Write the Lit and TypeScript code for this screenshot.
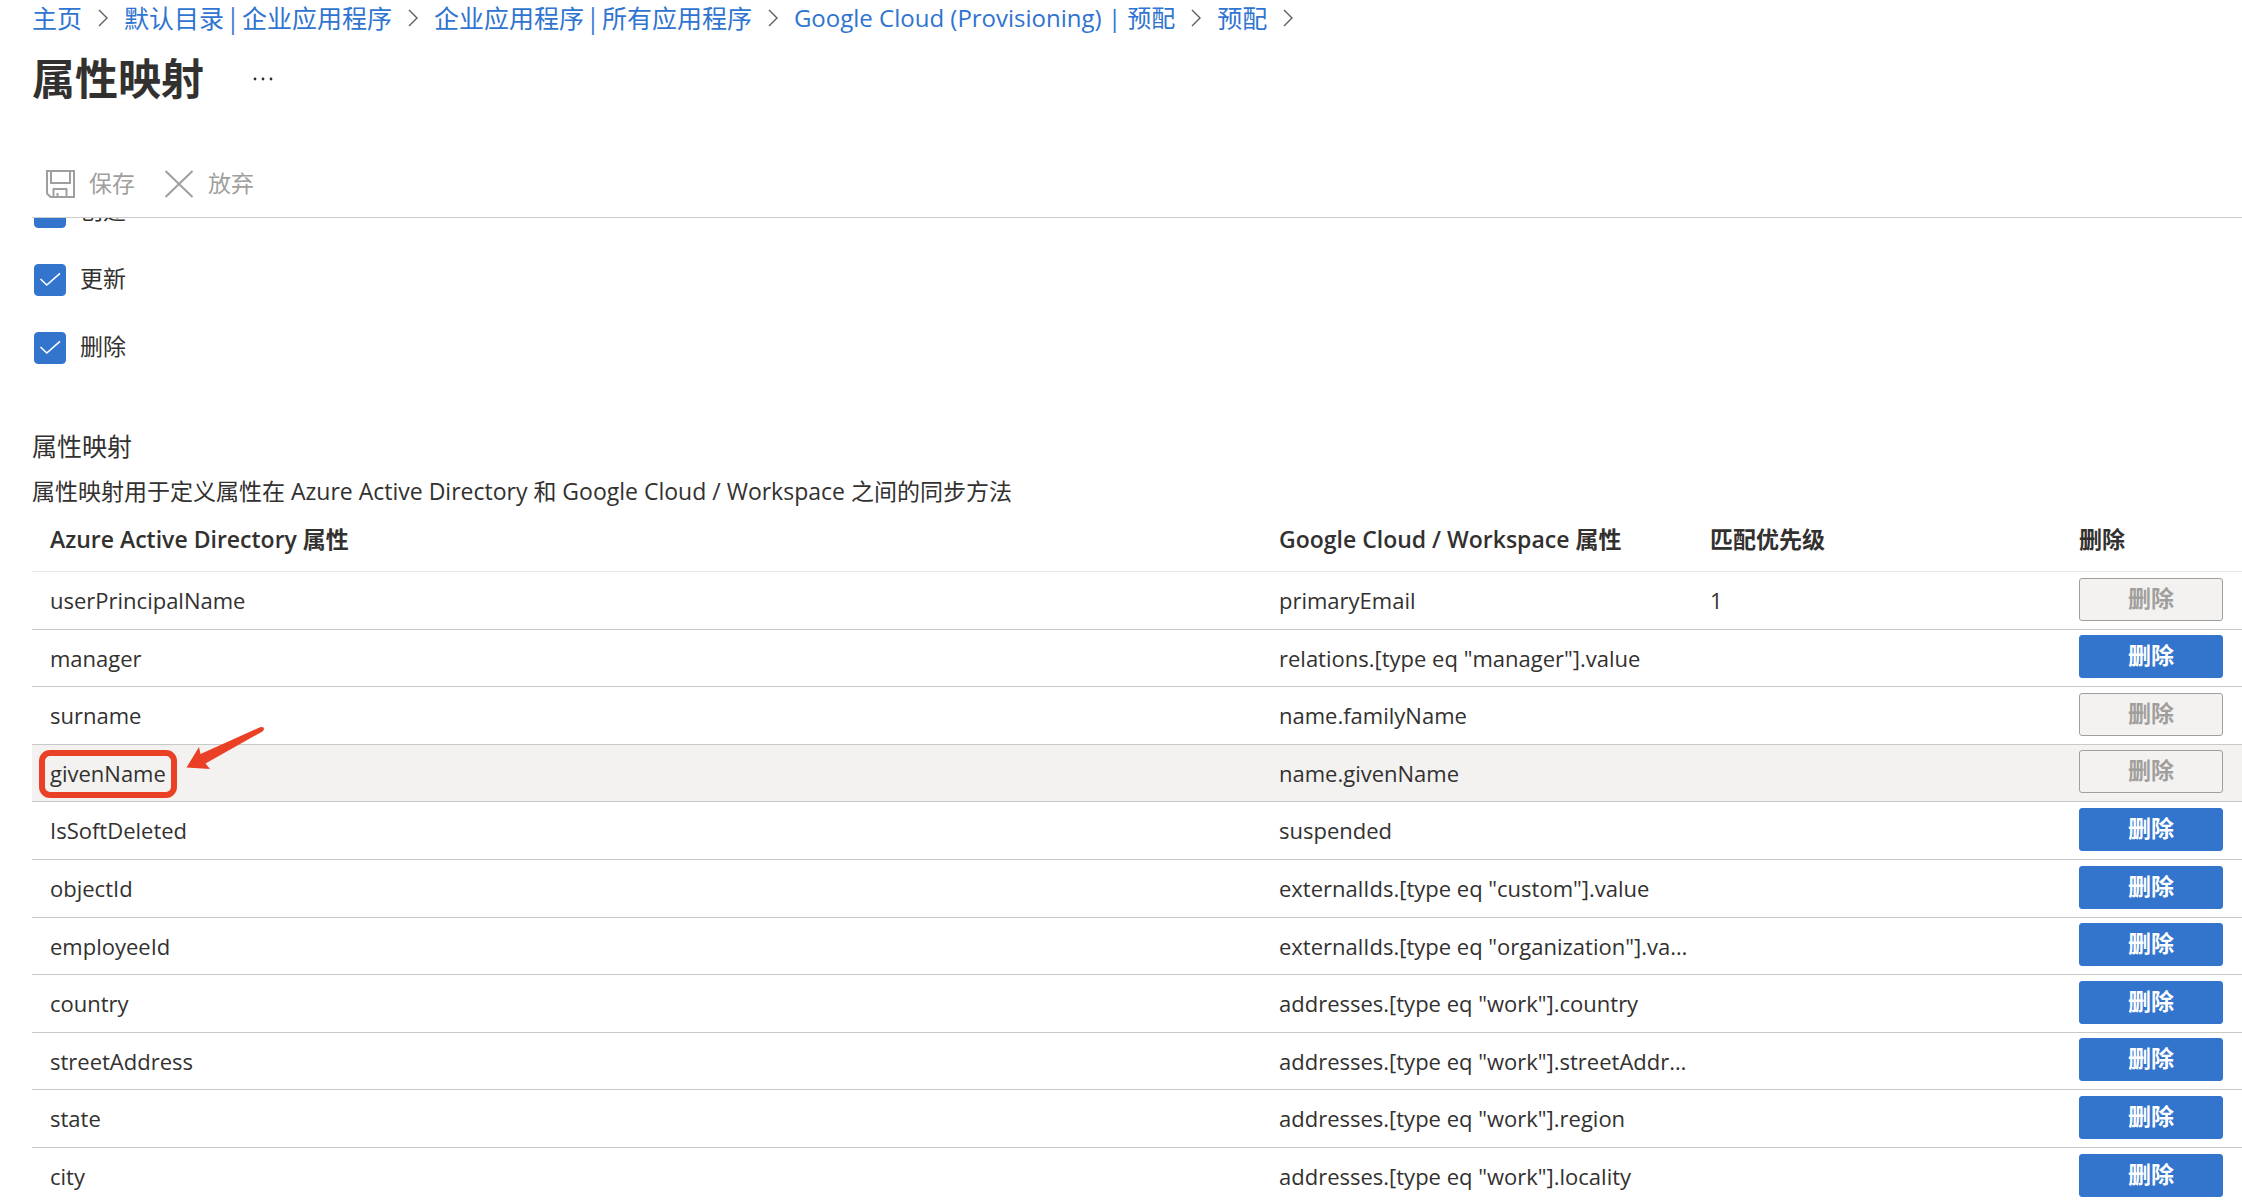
import { LitElement, html, css, svg, nothing } from "lit";
import { customElement, property, state } from "lit/decorators.js";
import { classMap } from "lit/directives/class-map.js";

interface Mapping {
  source: string;
  target: string;
  priority?: number;
  locked?: boolean;
  marked?: boolean;
}

const CRUMBS = [
  "主页",
  "默认目录 | 企业应用程序",
  "企业应用程序 | 所有应用程序",
  "Google Cloud (Provisioning) | 预配",
  "预配",
];

const MAPPINGS: Mapping[] = [
  { source: "userPrincipalName", target: "primaryEmail", priority: 1, locked: true },
  { source: "manager", target: 'relations.[type eq "manager"].value' },
  { source: "surname", target: "name.familyName", locked: true },
  { source: "givenName", target: "name.givenName", locked: true, marked: true },
  { source: "IsSoftDeleted", target: "suspended" },
  { source: "objectId", target: 'externalIds.[type eq "custom"].value' },
  { source: "employeeId", target: 'externalIds.[type eq "organization"].value' },
  { source: "country", target: 'addresses.[type eq "work"].country' },
  { source: "streetAddress", target: 'addresses.[type eq "work"].streetAddress' },
  { source: "state", target: 'addresses.[type eq "work"].region' },
  { source: "city", target: 'addresses.[type eq "work"].locality' },
];

const chevron = svg`<svg class="chevron" viewBox="0 0 10 18" aria-hidden="true"><path d="M1 1l8 8-8 8" /></svg>`;

@customElement("page-header")
export class PageHeader extends LitElement {
  static styles = css`
    :host {
      display: block;
      padding: 0 32px;
    }
    .crumbs {
      display: flex;
      align-items: center;
      gap: 16px;
      height: 36px;
      font-size: 25px;
      line-height: 34px;
      white-space: nowrap;
    }
    .link {
      padding-bottom: 2px;
      color: #2f74d0;
      font-family: "Noto Sans CJK SC", sans-serif;
      text-decoration: none;
    }
    .latin {
      padding-bottom: 0;
      font-family: "Open Sans", "Noto Sans CJK SC", sans-serif;
      font-size: 24px;
    }
    .chevron {
      width: 10px;
      height: 18px;
      fill: none;
      stroke: #605e5c;
      stroke-width: 1.4;
    }
    .heading {
      display: flex;
      align-items: center;
      gap: 49px;
      height: 86px;
    }
    .title {
      margin: 0;
      font-size: 43px;
      line-height: 60px;
      font-weight: 700;
    }
    .more {
      display: flex;
      padding: 0;
      border: 0;
      background: none;
    }
    .dots {
      width: 20px;
      height: 4px;
      fill: #323130;
    }
  `;

  render() {
    return html`
      <nav class="crumbs" aria-label="导航路径">
        ${CRUMBS.map(
          (name) => html`<a class=${classMap({ link: true, latin: name.startsWith("Google") })} href="#">${name}</a>${chevron}`
        )}
      </nav>
      <div class="heading">
        <h1 class="title">属性映射</h1>
        <button class="more" type="button" aria-label="更多">
          <svg class="dots" viewBox="0 0 20 4" aria-hidden="true">
            <circle cx="2" cy="2" r="1.4" /><circle cx="10" cy="2" r="1.4" /><circle cx="18" cy="2" r="1.4" />
          </svg>
        </button>
      </div>
    `;
  }
}

@customElement("command-bar")
export class CommandBar extends LitElement {
  static styles = css`
    :host {
      display: flex;
      align-items: center;
      gap: 29px;
      height: 68px;
      margin: 28px 0 0 32px;
      padding-left: 13px;
      box-sizing: border-box;
      border-bottom: 1px solid #cccccc;
    }
    .command {
      display: flex;
      align-items: center;
      gap: 14px;
      padding: 0;
      border: 0;
      background: none;
      color: #a19f9d;
      font: inherit;
    }
    .name {
      padding-bottom: 2px;
    }
    .icon {
      width: 30px;
      height: 30px;
      fill: none;
      stroke: #a19f9d;
      stroke-width: 2;
    }
  `;

  render() {
    return html`
      <button class="command" type="button" disabled>
        <svg class="icon" viewBox="0 0 30 30" aria-hidden="true">
          <path d="M2 2h27v26H5.500L2 24.500z M6 2v12h19V2 M8.500 28v-8h13v8 M12.500 28v-4" />
        </svg>
        <span class="name">保存</span>
      </button>
      <button class="command" type="button" disabled>
        <svg class="icon" viewBox="0 0 30 30" aria-hidden="true"><path d="M1.500 2l27 26M28.500 2l-27 26" /></svg>
        <span class="name">放弃</span>
      </button>
    `;
  }
}

@customElement("action-option")
export class ActionOption extends LitElement {
  @property() label = "";

  static styles = css`
    :host {
      display: block;
    }
    .option {
      display: flex;
      align-items: center;
      gap: 14px;
      height: 32px;
    }
    .box {
      display: grid;
      width: 32px;
      height: 32px;
    }
    .input,
    .tick {
      grid-area: 1 / 1;
      width: 32px;
      height: 32px;
    }
    .input {
      appearance: none;
      margin: 0;
      border: 1px solid #3375cd;
      border-radius: 4px;
    }
    .input:checked {
      background: #3375cd;
    }
    .tick {
      pointer-events: none;
      fill: none;
      stroke: #ffffff;
      stroke-width: 1.6;
    }
    .name {
      padding-bottom: 4px;
      line-height: 28px;
    }
  `;

  render() {
    return html`
      <label class="option">
        <span class="box">
          <input class="input" type="checkbox" checked />
          <svg class="tick" viewBox="0 0 32 32" aria-hidden="true"><path d="M6.500 15l6.300 6L26 9.300" /></svg>
        </span>
        <span class="name">${this.label}</span>
      </label>
    `;
  }
}

@customElement("mapping-table")
export class MappingTable extends LitElement {
  @state() private rows = MAPPINGS;

  static styles = css`
    :host {
      display: block;
    }
    .table {
      width: 100%;
      table-layout: fixed;
      border-collapse: separate;
      border-spacing: 0;
      font-size: 22px;
      line-height: 32px;
    }
    .col-target {
      width: 431px;
    }
    .col-priority {
      width: 369px;
    }
    .col-action {
      width: 181px;
    }
    .head,
    .cell {
      box-sizing: border-box;
      padding: 0 0 0 18px;
      text-align: left;
      white-space: nowrap;
      overflow: hidden;
      text-overflow: ellipsis;
    }
    .head {
      height: 64px;
      padding-bottom: 2px;
      font-size: 23px;
      font-weight: 600;
      border-bottom: 1px solid #e8e8e8;
    }
    .cell {
      height: 58px;
      padding-bottom: 1px;
      border-bottom: 1px solid #c8c8c8;
    }
    .cell.action {
      padding-bottom: 3px;
    }
    .row:nth-child(5n + 2) .cell,
    .row:nth-child(5n + 4) .cell {
      height: 57px;
    }
    .marked {
      background: #f3f2f1;
    }
    .callout {
      position: relative;
    }
    .cell.open {
      overflow: visible;
    }
    .note {
      position: absolute;
      left: -12px;
      top: -33px;
      width: 228px;
      height: 76px;
      pointer-events: none;
    }
    .frame {
      fill: none;
      stroke: #ea4025;
      stroke-width: 6;
    }
    .arrow {
      fill: #ea4025;
    }
    .remove {
      display: block;
      width: 144px;
      height: 43px;
      padding: 0 0 3px;
      border: 1px solid #3375cd;
      border-radius: 3px;
      background: #3375cd;
      color: #ffffff;
      font: inherit;
      font-size: 23px;
      font-weight: 700;
    }
    .remove:disabled {
      border-color: #a19f9d;
      background: #f3f2f1;
      color: #a19f9d;
    }
  `;

  private note() {
    return html`
      <svg class="note" viewBox="0 0 228 76" aria-hidden="true">
        <rect class="frame" x="4" y="28" width="132" height="42" rx="8" />
        <path class="arrow" d="M148.500 42.500L161 22l1.500 7L222 2.200q4-1 4 1.600q0 1.600-1.600 2.600L167.500 38.500l4.500 5.500z" />
      </svg>
    `;
  }

  render() {
    return html`
      <table class="table">
        <colgroup>
          <col />
          <col class="col-target" />
          <col class="col-priority" />
          <col class="col-action" />
        </colgroup>
        <thead>
          <tr>
            <th class="head" scope="col">Azure Active Directory 属性</th>
            <th class="head" scope="col">Google Cloud / Workspace 属性</th>
            <th class="head" scope="col">匹配优先级</th>
            <th class="head" scope="col">删除</th>
          </tr>
        </thead>
        <tbody>
          ${this.rows.map(
            (r) => html`
              <tr class=${classMap({ row: true, marked: !!r.marked })}>
                <td class=${classMap({ cell: true, open: !!r.marked })}>
                  ${r.marked ? html`<span class="callout">${r.source}${this.note()}</span>` : r.source}
                </td>
                <td class="cell">${r.target}</td>
                <td class="cell">${r.priority ?? nothing}</td>
                <td class="cell action">
                  <button class="remove" type="button" ?disabled=${!!r.locked}>删除</button>
                </td>
              </tr>
            `
          )}
        </tbody>
      </table>
    `;
  }
}

@customElement("app-root")
export class AppRoot extends LitElement {
  static styles = css`
    :host {
      display: flex;
      flex-direction: column;
      height: 100vh;
      overflow: hidden;
      background: #ffffff;
      color: #323130;
      font-family: "Open Sans", "Noto Sans CJK SC", sans-serif;
      font-size: 23px;
      line-height: 32px;
    }
    .content {
      flex: 1;
      min-height: 0;
      overflow: hidden;
      padding-left: 32px;
    }
    .options {
      display: flex;
      flex-direction: column;
      gap: 36px;
      margin-top: -22px;
      padding-left: 2px;
    }
    .subtitle {
      margin: 64px 0 0;
      font-size: 25px;
      line-height: 36px;
      font-weight: 400;
    }
    .text {
      margin: 10px 0 0;
      font-size: 23px;
      line-height: 34px;
    }
  `;

  render() {
    return html`
      <page-header></page-header>
      <command-bar></command-bar>
      <main class="content" lang="zh-CN">
        <div class="options">
          <action-option label="创建"></action-option>
          <action-option label="更新"></action-option>
          <action-option label="删除"></action-option>
        </div>
        <h2 class="subtitle">属性映射</h2>
        <p class="text">属性映射用于定义属性在 Azure Active Directory 和 Google Cloud / Workspace 之间的同步方法</p>
        <mapping-table></mapping-table>
      </main>
    `;
  }
}
